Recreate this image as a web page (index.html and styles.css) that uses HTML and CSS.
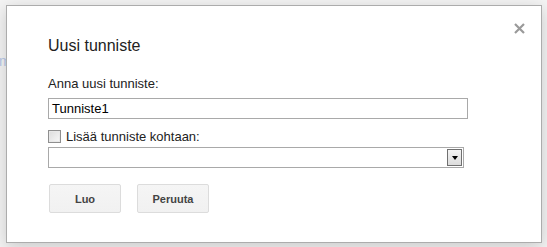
FILE: index.html
```html
<!DOCTYPE html>
<html lang="fi">
<head>
<meta charset="utf-8">
<link rel="stylesheet" href="styles.css">
</head>
<body>
<span class="bg-text">m</span>
<div class="dialog">
  <button class="close" aria-label="Sulje">
    <svg width="11" height="11" viewBox="0 0 11 11"><path d="M1 1 L10 10 M10 1 L1 10" stroke="#9a9a9a" stroke-width="2.2" fill="none"/></svg>
  </button>
  <div class="title">Uusi tunniste</div>
  <div class="label">Anna uusi tunniste:</div>
  <div class="input">Tunniste1</div>
  <div class="check-row">
    <span class="checkbox"></span>
    <span class="check-label">Lisää tunniste kohtaan:</span>
  </div>
  <div class="select">
    <span class="select-btn"><span class="arrow"></span></span>
  </div>
  <div class="buttons">
    <button class="btn">Luo</button>
    <button class="btn">Peruuta</button>
  </div>
</div>
</body>
</html>
```

FILE: styles.css
```css
html, body {
  margin: 0;
  padding: 0;
  width: 547px;
  height: 247px;
  overflow: hidden;
  background: #f4f4f4;
  font-family: "Liberation Sans", Arial, sans-serif;
}
body {
  position: relative;
}
.bg-text {
  position: absolute;
  left: -1px;
  top: 53px;
  font-size: 14px;
  color: #b8c8e8;
}
.dialog {
  position: relative;
  box-sizing: border-box;
  margin: 5px 0 0 6px;
  width: 536px;
  height: 238px;
  background: #fff;
  border: 1px solid #acacac;
  box-shadow: 0 4px 16px rgba(0,0,0,0.18);
  padding: 31px 0 0 41px;
}
.close {
  position: absolute;
  top: 17px;
  right: 16px;
  width: 11px;
  height: 11px;
  padding: 0;
  border: 0;
  background: none;
  display: flex;
}
.title {
  font-size: 16px;
  line-height: 18px;
  color: #222;
}
.label {
  margin-top: 21px;
  font-size: 13px;
  line-height: 15px;
  color: #222;
}
.input {
  box-sizing: border-box;
  margin-top: 7px;
  width: 420px;
  height: 21px;
  border: 1px solid #a9a9a9;
  font-size: 13px;
  line-height: 19px;
  padding-left: 3px;
  color: #000;
}
.check-row {
  display: flex;
  align-items: center;
  gap: 5px;
  margin-top: 8px;
  height: 19px;
}
.checkbox {
  box-sizing: border-box;
  width: 13px;
  height: 13px;
  border: 1px solid #8f8f8f;
  background: linear-gradient(135deg, #dcdcdc, #f8f8f8);
  box-shadow: inset 0 0 0 1px #e8e8e8;
}
.check-label {
  font-size: 13px;
  line-height: 15px;
  color: #222;
}
.select {
  box-sizing: border-box;
  margin-top: 1px;
  width: 416px;
  height: 21px;
  border: 1px solid #a9a9a9;
  display: flex;
  justify-content: flex-end;
  padding: 1px;
}
.select-btn {
  box-sizing: border-box;
  width: 15px;
  height: 17px;
  border: 1px solid #707070;
  background: linear-gradient(#f4f4f4, #dcdcdc);
  display: flex;
  align-items: center;
  justify-content: center;
}
.arrow {
  width: 0;
  height: 0;
  border-left: 3.5px solid transparent;
  border-right: 3.5px solid transparent;
  border-top: 4px solid #000;
  margin-top: 1px;
}
.buttons {
  display: flex;
  gap: 16px;
  margin-top: 16px;
  padding-left: 1px;
}
.btn {
  box-sizing: border-box;
  width: 72px;
  height: 29px;
  border: 1px solid #dcdcdc;
  border-radius: 2px;
  background: linear-gradient(#f5f5f5, #f1f1f1);
  font-family: "Liberation Sans", Arial, sans-serif;
  font-size: 11px;
  font-weight: bold;
  color: #444;
  padding: 0;
}
```
